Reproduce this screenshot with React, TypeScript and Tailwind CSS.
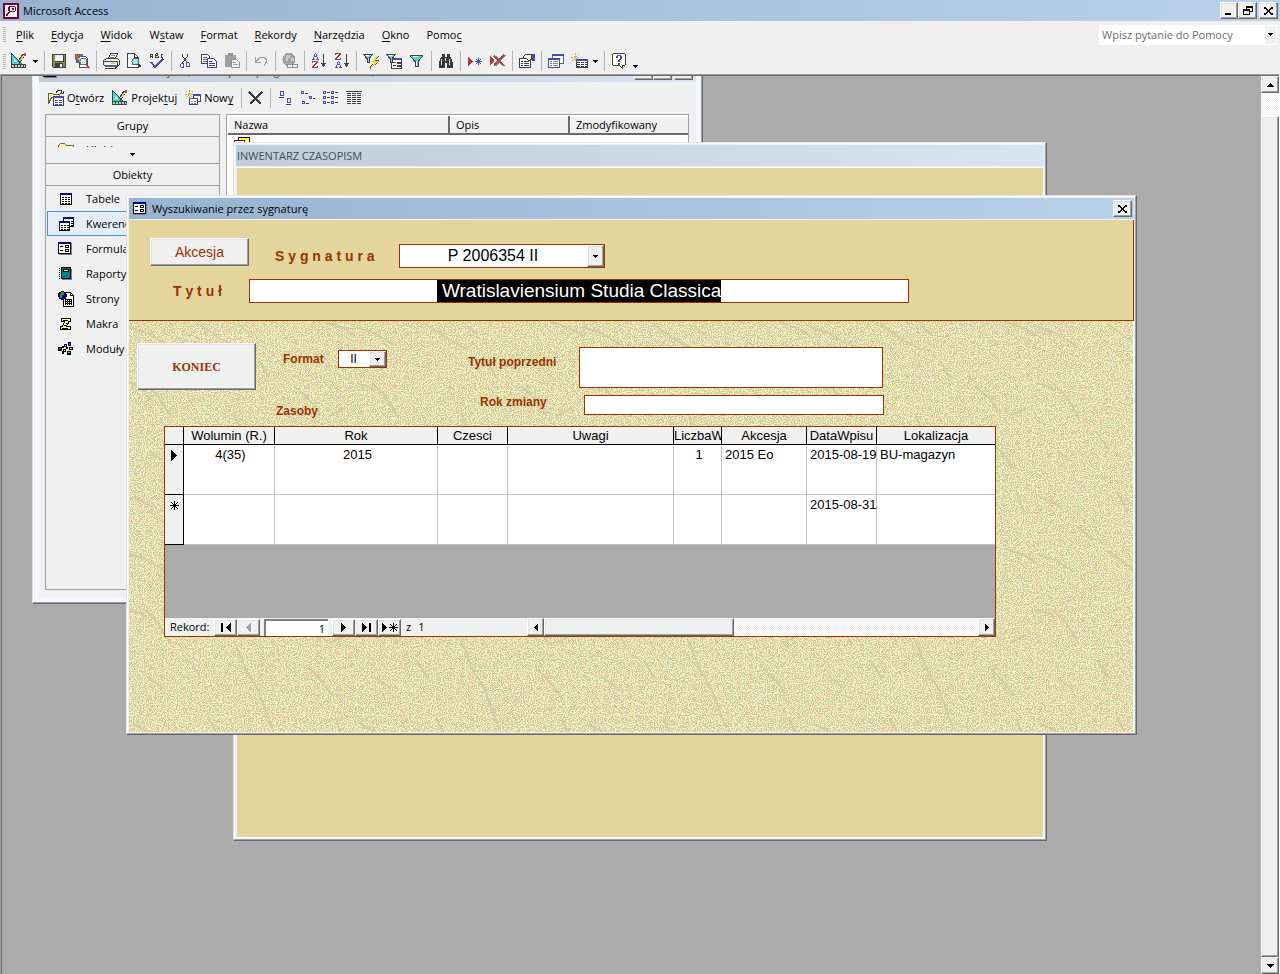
import React, { useEffect, useRef } from "react";

const raised =
  "bg-[#f0f0f0] border border-t-white border-l-white border-r-[#696969] border-b-[#696969] shadow-[inset_-1px_-1px_0_#a0a0a0,inset_1px_1px_0_#e3e3e3]";
const windowFrame =
  "border border-t-[#e3e3e3] border-l-[#e3e3e3] border-r-[#696969] border-b-[#696969] shadow-[inset_-1px_-1px_0_#a0a0a0,inset_1px_1px_0_#ffffff]";
const dither =
  "bg-[repeating-conic-gradient(#ffffff_0_25%,#f0f0f0_0_50%)] bg-[length:2px_2px]";
const formLabel = "text-xs font-bold text-[#993300]";
const formBox = "border border-[#993300] bg-white outline-none";

type IconProps = { children: React.ReactNode; w?: number; h?: number };

const Icon = ({ children, w = 16, h = 16 }: IconProps) => (
  <svg
    width={w}
    height={h}
    viewBox={`0 0 ${w} ${h}`}
    shapeRendering="crispEdges"
    fill="none"
    aria-hidden="true"
    className="block shrink-0"
  >
    {children}
  </svg>
);

/* ---------- small glyphs ---------- */

const Down = () => (
  <Icon w={5} h={3}>
    <path fill="#000" d="M0 0h5v1H0zM1 1h3v1H1zM2 2h1v1H2z" />
  </Icon>
);
const Up = () => (
  <Icon w={7} h={4}>
    <path fill="#000" d="M3 0h1v1H3zM2 1h3v1H2zM1 2h5v1H1zM0 3h7v1H0z" />
  </Icon>
);
const BigDown = () => (
  <Icon w={7} h={4}>
    <path fill="#000" d="M0 0h7v1H0zM1 1h5v1H1zM2 2h3v1H2zM3 3h1v1H3z" />
  </Icon>
);
const Right = () => (
  <Icon w={4} h={7}>
    <path fill="#000" d="M0 0h1v7H0zM1 1h1v5H1zM2 2h1v3H2zM3 3h1v1H3z" />
  </Icon>
);
const Left = () => (
  <Icon w={4} h={7}>
    <path fill="#000" d="M3 0h1v7H3zM2 1h1v5H2zM1 2h1v3H1zM0 3h1v1H0z" />
  </Icon>
);
const Cross = () => (
  <Icon w={9} h={8}>
    <path
      fill="#000"
      d="M0 0h2v1H0zM7 0h2v1H7zM0 1h3v1H0zM6 1h3v1H6zM2 2h2v1H2zM5 2h2v1H5zM3 3h3v2H3zM2 5h2v1H2zM5 5h2v1H5zM0 6h3v1H0zM6 6h3v1H6zM0 7h2v1H0zM7 7h2v1H7z"
    />
  </Icon>
);
const Star = () => (
  <Icon w={9} h={9}>
    <path stroke="#000" d="M4.500 0v9M0 4.500h9" />
    <path fill="#000" d="M1 1h1v1H1zM2 2h1v1H2zM3 3h1v1H3zM5 3h1v1H5zM6 2h1v1H6zM7 1h1v1H7zM3 5h1v1H3zM2 6h1v1H2zM1 7h1v1H1zM5 5h1v1H5zM6 6h1v1H6zM7 7h1v1H7z" />
  </Icon>
);

/* ---------- toolbar icons ---------- */

const DesignIcon = () => (
  <Icon>
    <path fill="#3fd9d9" d="M1 1v10h10z" />
    <path fill="#f0f0f0" d="M3 6v3h3z" />
    <path stroke="#404040" d="M.5 0v11M1 1l10 10M0 11.500h15M0 14.500h15M.5 11v4M14.500 11v4" />
    <path fill="#a8dcdc" d="M1 12h13v2H1z" />
    <path stroke="#404040" d="M3.500 12v2M6.500 12v2M9.500 12v2M12.500 12v2" />
    <path stroke="#404040" strokeWidth="3" d="M8 9l5-8" />
    <path stroke="#d8c860" strokeWidth="1.500" d="M9 8l4-6" />
    <path fill="#a05050" d="M13 0h2v3h-2z" />
    <path fill="#404040" d="M8 9h1v2H8z" />
  </Icon>
);
const SaveIcon = () => (
  <Icon>
    <path fill="#404040" d="M1 1h14v14H2l-1-1z" />
    <path fill="#8c8c3c" d="M2 2h2v7h9V2h1v12H2z" />
    <path fill="#f0f0f0" d="M4 2h8v6H4z" />
    <path fill="#404040" d="M4 10h8v5H4z" />
    <path fill="#f0f0f0" d="M9 11h2v3H9z" />
  </Icon>
);
const FileSearchIcon = () => (
  <Icon>
    <path fill="#fff" stroke="#505050" d="M5.500 3.500h6l2 2v9h-8z" />
    <path fill="#8a8a3c" stroke="#606060" d="M1.500 1.500h4v3h-4z" />
    <path fill="#6060b0" d="M2 6h4v4H2zM6 1h3v3H6z" />
    <path fill="#a86060" d="M1 4h3v3H1z" />
    <path fill="#e8d860" d="M5 5h3v3H5z" />
    <circle cx="9.500" cy="8.500" r="3.500" fill="#d8f0f0" stroke="#707070" />
    <path stroke="#c03030" strokeWidth="2" d="M12 11l3 4" />
  </Icon>
);
const PrintIcon = () => (
  <Icon w={17}>
    <path fill="#fff" stroke="#404040" d="M5.500 5.500l2-5h7l-2 5z" />
    <path stroke="#808080" d="M8 2.500h4M7 4.500h4" />
    <path fill="#f0f0f0" stroke="#404040" d="M.5 7.500l3-2h11l2 2v4l-2 2h-12l-2-2z" />
    <path stroke="#404040" d="M1 8.500h13M14.500 8v5M2 15.500h10l3-3" />
    <path fill="#c8b838" d="M8 10h4v1H8z" />
    <path fill="#606060" d="M2 12h12v2H2z" />
  </Icon>
);
const PreviewIcon = () => (
  <Icon>
    <path fill="#fff" stroke="#404040" d="M1.500.5h7l4 4v10h-11z" />
    <path stroke="#404040" d="M8.500 1v3.500H12" />
    <circle cx="9.500" cy="8.500" r="3.500" fill="#9fe3e3" stroke="#606060" />
    <path stroke="#404040" strokeWidth="2" d="M12 11l3 3" />
  </Icon>
);
const SpellIcon = () => (
  <Icon>
    <path stroke="#404040" d="M1.500 5V1.500h2V5M1 3.500h3M6.500 5V.5M7 .5h1.500v2H7M7 4.500h2V3M14 1.500h-2v3h2" />
    <path stroke="#4a4ab0" strokeWidth="2" d="M2 9l4 5 8-8" />
  </Icon>
);
const CutIcon = () => (
  <Icon>
    <path stroke="#404040" d="M4.500 1v2l5 7M9.500 1v2l-5 7" />
    <path stroke="#4a4ab0" d="M3.500 10.500h2v4h-2l-1-1v-2zM8.500 9.500h2l1 1v3h-3z" />
  </Icon>
);
const CopyIcon = () => (
  <Icon>
    <path fill="#fff" stroke="#404040" d="M.5 1.500h6l2 2v7h-8z" />
    <path stroke="#606060" d="M2 4.500h4M2 6.500h4M2 8.500h4" />
    <path fill="#fff" stroke="#4040a0" d="M6.500 5.500h6l3 3v6h-9z" />
    <path stroke="#4040a0" d="M8 8.500h3M8 10.500h6M8 12.500h6" />
  </Icon>
);
const PasteIcon = () => (
  <Icon>
    <path fill="#a0a0a0" d="M1 2h11v12H1z" />
    <path fill="#909090" d="M4 0h5v3H4z" />
    <path fill="#f4f4f4" stroke="#909090" d="M7.500 6.500h5l3 3v5h-8z" />
    <path stroke="#a0a0a0" d="M9 9.500h3M9 11.500h5" />
  </Icon>
);
const UndoIcon = () => (
  <Icon>
    <path stroke="#a0a0a0" d="M2.500 4v6M2 9.500h6M3 8.500l4-4h4l2 2v3l-2 3" />
  </Icon>
);
const GlobeIcon = () => (
  <Icon>
    <circle cx="7" cy="6.500" r="6" fill="#a4a4a4" stroke="#989898" />
    <path fill="#c8c8c8" d="M4 2h4v3H6v3H4zM9 5h3v3H9z" />
    <path fill="#f0f0f0" stroke="#909090" d="M5.500 11.500h5v3h-5zM10.500 11.500h5v3h-5z" />
  </Icon>
);
const LetterA = ({ x, y }: { x: number; y: number }) => (
  <path
    transform={`translate(${x} ${y})`}
    fill="#4a4ab0"
    d="M3 0h1v1H3zM2 1h1v3H2zM4 1h1v3H4zM2 3h3v1H2zM1 4h1v3H1zM5 4h1v3H5zM0 6h3v1H0zM4 6h3v1H4z"
  />
);
const LetterZ = ({ x, y }: { x: number; y: number }) => (
  <path
    transform={`translate(${x} ${y})`}
    fill="#a83c3c"
    d="M0 0h6v1H0zM0 0h1v2H0zM4 1h2v1H4zM3 2h2v1H3zM2 3h2v1H2zM1 4h2v1H1zM0 5h2v1H0zM0 6h6v1H0zM5 5h1v2H5z"
  />
);
const SortArrow = () => (
  <path fill="#404040" d="M12 1h1v13h-1zM10 10h5v1h-5zM11 11h3v2h-3z" />
);
const SortAscIcon = () => (
  <Icon>
    <LetterA x={1} y={0} />
    <LetterZ x={1} y={8} />
    <SortArrow />
  </Icon>
);
const SortDescIcon = () => (
  <Icon>
    <LetterZ x={1} y={0} />
    <LetterA x={1} y={8} />
    <SortArrow />
  </Icon>
);
const FunnelSmall = () => (
  <>
    <path fill="#8ad0d0" stroke="#404040" d="M.5 1.500h9l-3.500 4v4h-2v-4z" />
    <path stroke="#e8ffff" d="M3 2.500h3" />
  </>
);
const FilterSelectionIcon = () => (
  <Icon>
    <FunnelSmall />
    <path stroke="#505050" strokeWidth="2" d="M15 3l-4 5h4l-8 7" />
    <path stroke="#f0e040" strokeWidth="1.500" d="M14 3l-4 6h4l-6 5" />
  </Icon>
);
const FilterFormIcon = () => (
  <Icon>
    <path fill="#fff" stroke="#404040" d="M5.500 5.500h10v10h-10z" />
    <path fill="#4a4ab0" d="M6 5h10v2H6z" />
    <path stroke="#404040" d="M7 9.500h3M7 12.500h3M11.500 9.500h3v1h-3zM11.500 12.500h3v1h-3z" />
    <FunnelSmall />
  </Icon>
);
const FilterIcon = () => (
  <Icon>
    <path fill="#5cc8c8" stroke="#404040" d="M1.500 2.500h12v1l-4.500 5v5h-3v-5l-4.500-5z" />
    <path stroke="#e8ffff" d="M4 3.500h5M7.500 8v5" />
  </Icon>
);
const BinocularsIcon = () => (
  <Icon>
    <path fill="#383838" d="M4 1h3v3h2V1h3v3h1l2 6v5H9v-5H7v5H1v-5l2-6h1z" />
    <path stroke="#d8d8d8" d="M3.500 6v6M11.500 6v6M7.500 5v3" />
  </Icon>
);
const NewRecordIcon = () => (
  <Icon>
    <path fill="#a83c3c" d="M1 4h1v9H1zM2 5h1v7H2zM3 6h1v5H3zM4 7h1v3H4zM5 8h1v1H5z" />
    <path stroke="#4a4ab0" d="M11.500 5v7M8 8.500h7M9 6l5 5M14 6l-5 5" />
  </Icon>
);
const DeleteRecordIcon = () => (
  <Icon>
    <path fill="#a83c3c" d="M0 3h1v9H0zM1 4h1v7H1zM2 5h1v5H2zM3 6h1v3H3z" />
    <path stroke="#808080" strokeWidth="2" d="M5 3l9 10M15 2L5 13" />
    <path stroke="#a85050" strokeWidth="1.500" d="M4 3l9 9M14 2L4 12" />
  </Icon>
);
const PropertiesIcon = () => (
  <Icon>
    <path fill="#fff" stroke="#404040" d="M.5 5.500h11v9H.5z" />
    <path stroke="#404040" d="M2 8.500h2M5 8.500h5M2 10.500h2M5 10.500h5M2 12.500h2M5 12.500h5" />
    <path fill="#f8f0d8" stroke="#404040" d="M4.500 3.500l2-2h6v5l-3 1-2-2h-3z" />
    <path fill="#4a4ab0" d="M13 1h3v7h-3z" />
  </Icon>
);
const DbWindowIcon = () => (
  <Icon>
    <path fill="#fff" stroke="#606080" d="M4.500 1.500h11v9h-11z" />
    <path fill="#4a4ab0" d="M4 1h12v2H4z" />
    <path fill="#fff" stroke="#505060" d="M.5 5.500h11v9H.5z" />
    <path fill="#4a4ab0" d="M0 5h12v2H0z" />
    <path stroke="#808080" d="M2 8.500h2M5 8.500h5M2 10.500h2M5 10.500h5M2 12.500h2M5 12.500h5" />
  </Icon>
);
const NewObjectIcon = () => (
  <Icon w={17}>
    <path stroke="#c8bc60" strokeDasharray="2 1" d="M4.500 0v9M0 4.500h9M1 1l7 7M8 1L1 8" />
    <path fill="#fff" stroke="#404040" d="M5.500 6.500h11v8h-11z" />
    <path fill="#4a4ab0" d="M5 6h12v2H5z" />
    <path stroke="#404040" strokeDasharray="3 1" d="M6 9.500h10M6 11.500h10M6 13.500h10" />
  </Icon>
);
const HelpIcon = () => (
  <Icon>
    <path fill="#fffce8" stroke="#404040" d="M2.500.5h11l1 1v10l-1 1h-2v3l-3-3h-6l-1-1v-10z" />
    <path fill="#4a4ab0" d="M6 2h4v1H6zM5 3h2v2H5zM9 3h2v3H9zM8 6h2v1H8zM7 7h2v2H7zM7 10h2v2H7z" />
  </Icon>
);

/* ---------- database window icons ---------- */

const OpenIcon = () => (
  <Icon>
    <path fill="#fff0a0" stroke="#606040" d="M.5 3.500h4l1 1h6v3h-8l-3 6z" />
    <path stroke="#404040" d="M8 2.500l2-2h3l1 2M12 3.500h3v-3" />
    <path fill="#fff" stroke="#404080" d="M5.500 6.500h10v9h-10z" />
    <path fill="#4a4ab0" d="M5 6h11v2H5z" />
    <path stroke="#4a4ab0" d="M7 10.500h3M7 12.500h3M11 10.500h3M11 12.500h3M7 14.500h3M11 14.500h3" />
  </Icon>
);
const NewIcon = () => (
  <Icon>
    <path stroke="#c8b820" strokeDasharray="2 1" d="M4.500 0v8M0 4.500h8M1 1l6 6M8 1L1 8" />
    <path fill="#fff" stroke="#404080" d="M8.500 4.500h7v7h-7z" />
    <path fill="#4a4ab0" d="M8 4h8v2H8z" />
    <path fill="#fff" stroke="#404080" d="M4.500 8.500h8v6h-8z" />
    <path fill="#4a4ab0" d="M4 8h9v1H4z" />
    <path stroke="#808080" d="M6 11.500h2M9 11.500h2M6 13.500h2M9 13.500h2" />
  </Icon>
);
const DeleteIcon = () => (
  <Icon>
    <path stroke="#383838" strokeWidth="1.500" d="M1 2l12 12M14 2L2 14" />
  </Icon>
);
const LargeIconsIcon = () => (
  <Icon>
    <path stroke="#4a4ab0" d="M3.500 1.500h3v4h-3zM10.500 8.500h3v4h-3z" />
    <path stroke="#404040" d="M2 7.500h5M9 14.500h5" />
  </Icon>
);
const SmallIconsIcon = () => (
  <Icon>
    <path stroke="#4a4ab0" d="M1.500 1.500h2v2h-2zM9.500 6.500h2v2h-2zM2.500 11.500h2v2h-2z" />
    <path stroke="#404040" d="M5 3.500h3M13 8.500h2M6 13.500h3" />
  </Icon>
);
const ListIcon = () => (
  <Icon>
    <path stroke="#4a4ab0" d="M.5 1.500h2v2h-2zM.5 6.500h2v2h-2zM.5 11.500h2v2h-2zM8.500 1.500h2v2h-2zM8.500 6.500h2v2h-2zM8.500 11.500h2v2h-2z" />
    <path stroke="#404040" d="M4 2.500h3M4 7.500h3M4 12.500h3M12 2.500h3M12 7.500h3M12 12.500h3" />
  </Icon>
);
const DetailsIcon = () => (
  <Icon>
    <path stroke="#404040" d="M0 1.500h16" />
    <path
      stroke="#404040"
      strokeDasharray="4 1"
      d="M1 3.500h15M1 5.500h15M1 7.500h15M1 9.500h15M1 11.500h15M1 13.500h15"
    />
  </Icon>
);
const TableIcon = () => (
  <Icon>
    <path fill="#fff" stroke="#000" d="M2.500 2.500h11v11h-11z" />
    <path fill="#000080" d="M2 2h12v2H2z" />
    <path stroke="#000" strokeDasharray="2 1" d="M4 6.500h8M4 8.500h8M4 10.500h8M4 12.500h8" />
  </Icon>
);
const QueryIcon = () => (
  <Icon>
    <path fill="#fff" stroke="#000" d="M5.500 1.500h10v9h-10z" />
    <path fill="#000080" d="M5 1h11v2H5z" />
    <path stroke="#000" strokeDasharray="2 1" d="M7 5.500h8M7 7.500h8M7 9.500h8" />
    <path fill="#fff" stroke="#000" d="M1.500 5.500h10v9h-10z" />
    <path fill="#000080" d="M1 5h11v2H1z" />
    <path stroke="#000" strokeDasharray="2 1" d="M3 9.500h8M3 11.500h8M3 13.500h8" />
  </Icon>
);
const FormIcon = () => (
  <Icon w={14} h={13}>
    <path fill="#fff" stroke="#000" d="M.5.5h12v11H.5z" />
    <path fill="#000080" d="M0 0h13v2H0z" />
    <path stroke="#000" d="M2 4.500h3M2 8.500h3M7.500 3.500h3v2h-3zM7.500 7.500h3v2h-3z" />
    <path fill="#808080" d="M13 1h1v12H1v-1h12z" />
  </Icon>
);
const ReportIcon = () => (
  <Icon>
    <path fill="#008080" stroke="#000" d="M3.500 1.500h9v11h-9z" />
    <path fill="#fff" stroke="#000" d="M5.500 3.500h5v2h-5z" />
    <path stroke="#000" strokeDasharray="1 1" d="M1.500 2v11" />
    <path fill="#808080" d="M13 3h1v11H4v-1h9z" />
  </Icon>
);
const PageIcon = () => (
  <Icon>
    <path fill="#fff" stroke="#000" d="M5.500 1.500h7l3 3v11h-10z" />
    <path stroke="#000" d="M12.500 2v2.500H15" />
    <path fill="#000" d="M7 8h7v6H7z" />
    <path stroke="#fff" strokeDasharray="1 1" d="M8 9.500h5M8 11.500h5M8 13.500h5" />
    <circle cx="4.500" cy="4.500" r="4" fill="#0000a0" stroke="#000" />
    <path fill="#20a040" d="M3 1h3v3H4v3H2V3h1z" />
  </Icon>
);
const MacroIcon = () => (
  <Icon>
    <path fill="#ffff90" stroke="#000" d="M3.500 2.500h9v3h-2l-2 5h4v3h-10v-3h2l2-5h-3z" />
    <path stroke="#000" d="M5 4.500h5M8 7.500h3M6 9.500h3M4 12.500h6" />
  </Icon>
);
const ModuleIcon = () => (
  <Icon>
    <path fill="#000" d="M10 1h3v4h-3zM6 3h3v3H6zM0 6h4v4H0zM4 5h2v2H4zM11 6h4v3h-4zM5 8h3v3H5zM8 6h2v2H8zM9 10h4v4H9zM4 10h2v3H4z" />
    <path fill="#f0f" d="M11 2h1v2h-1zM1 7h2v1H1z" />
    <path fill="#0ff" d="M7 4h1v1H7zM10 11h2v1h-2z" />
    <path fill="#ff0" d="M12 7h2v1h-2zM6 9h1v1H6z" />
  </Icon>
);

/* ---------- shared pieces ---------- */

const ToolButton = ({ label, children }: { label: string; children: React.ReactNode }) => (
  <button type="button" aria-label={label} className="flex h-[22px] w-[23px] items-center pl-1">
    {children}
  </button>
);

const MenuArrow = ({ label, low }: { label: string; low?: boolean }) => (
  <button
    type="button"
    aria-label={label}
    className={`flex w-[11px] justify-center ${low ? "h-[22px] items-end pb-1" : "h-[22px] items-center"}`}
  >
    <Down />
  </button>
);

const Separator = () => (
  <div className="flex h-5 w-[6px] justify-center">
    <div className="w-px bg-[#b4b4b4]" />
  </div>
);

const Grip = () => (
  <div className="mr-px h-[15px] w-[3px] bg-[repeating-linear-gradient(#b8b8b8_0_1px,#f0f0f0_1px_2px)]" />
);

// Underlines the access key of a menu caption
const Caption = ({ text, at }: { text: string; at: number }) => (
  <span>
    {text.slice(0, at)}
    <span className="underline underline-offset-2">{text[at]}</span>
    {text.slice(at + 1)}
  </span>
);

const menus = [
  { text: "Plik", at: 0 },
  { text: "Edycja", at: 0 },
  { text: "Widok", at: 0 },
  { text: "Wstaw", at: 1 },
  { text: "Format", at: 0 },
  { text: "Rekordy", at: 0 },
  { text: "Narzędzia", at: 0 },
  { text: "Okno", at: 0 },
  { text: "Pomoc", at: 4 },
];

const TitleBar = () => (
  <header className="flex h-[21px] items-center bg-linear-to-r from-[#98b3d1] to-[#b9d1ec] pr-[2px] pl-[3px]">
    <Icon>
      <path fill="#fff" stroke="#7a0030" strokeWidth="2" d="M1 1h14v14H1z" />
      <path fill="#7a0030" d="M6 3h6v1H6zM5 4h2v4H5zM12 4h1v4h-1zM7 8h5v1H7zM6 8h2v1H6zM5 9h2v1H5zM4 10h2v1H4zM3 11h2v2H3zM9 5h2v2H9z" />
    </Icon>
    <h1 className="ml-1 flex-1">Microsoft Access</h1>
    <button type="button" aria-label="Minimalizuj" className={`flex h-[17px] w-[18px] items-end pb-[3px] pl-1 ${raised}`}>
      <span className="h-[2px] w-[6px] bg-black" />
    </button>
    <button type="button" aria-label="Przywróć" className={`flex h-[17px] w-[19px] items-center justify-center ${raised}`}>
      <Icon w={10} h={9}>
        <path stroke="#000" d="M3.500 3V.5h6v5H7M3 1.500h7M.5 3.500h6v5h-6zM0 4.500h7" />
      </Icon>
    </button>
    <button type="button" aria-label="Zamknij" className={`ml-[2px] flex h-[17px] w-[19px] items-center justify-center ${raised}`}>
      <Cross />
    </button>
  </header>
);

const MenuBar = () => (
  <nav className="flex h-[27px] items-center pl-[3px]">
    <Grip />
    <div className="flex flex-1 gap-[17px] pl-[9px]">
      {menus.map((m) => (
        <button type="button" key={m.text}>
          <Caption text={m.text} at={m.at} />
        </button>
      ))}
    </div>
    <div className="mr-[3px] flex h-5 w-[178px] bg-white p-px">
      <input
        type="text"
        aria-label="Wpisz pytanie do Pomocy"
        placeholder="Wpisz pytanie do Pomocy"
        className="min-w-0 flex-1 pl-[2px] outline-none placeholder:text-[#6d6d6d]"
      />
      <button type="button" aria-label="Pokaż pytania" className="flex w-[11px] items-center justify-center bg-[#f0f0f0]">
        <Down />
      </button>
    </div>
  </nav>
);

const Toolbar = () => (
  <div className="flex h-[26px] items-center pl-[3px]">
    <Grip />
    <ToolButton label="Widok projektu"><DesignIcon /></ToolButton>
    <MenuArrow label="Widoki" />
    <Separator />
    <ToolButton label="Zapisz"><SaveIcon /></ToolButton>
    <ToolButton label="Wyszukaj plik"><FileSearchIcon /></ToolButton>
    <Separator />
    <ToolButton label="Drukuj"><PrintIcon /></ToolButton>
    <ToolButton label="Podgląd wydruku"><PreviewIcon /></ToolButton>
    <ToolButton label="Pisownia"><SpellIcon /></ToolButton>
    <Separator />
    <ToolButton label="Wytnij"><CutIcon /></ToolButton>
    <ToolButton label="Kopiuj"><CopyIcon /></ToolButton>
    <ToolButton label="Wklej"><PasteIcon /></ToolButton>
    <Separator />
    <ToolButton label="Cofnij"><UndoIcon /></ToolButton>
    <Separator />
    <ToolButton label="Wstaw hiperłącze"><GlobeIcon /></ToolButton>
    <Separator />
    <ToolButton label="Sortuj rosnąco"><SortAscIcon /></ToolButton>
    <ToolButton label="Sortuj malejąco"><SortDescIcon /></ToolButton>
    <Separator />
    <ToolButton label="Filtruj według wyboru"><FilterSelectionIcon /></ToolButton>
    <ToolButton label="Filtruj według formularza"><FilterFormIcon /></ToolButton>
    <ToolButton label="Zastosuj filtr"><FilterIcon /></ToolButton>
    <Separator />
    <ToolButton label="Znajdź"><BinocularsIcon /></ToolButton>
    <Separator />
    <ToolButton label="Nowy rekord"><NewRecordIcon /></ToolButton>
    <ToolButton label="Usuń rekord"><DeleteRecordIcon /></ToolButton>
    <Separator />
    <ToolButton label="Właściwości"><PropertiesIcon /></ToolButton>
    <Separator />
    <ToolButton label="Okno bazy danych"><DbWindowIcon /></ToolButton>
    <ToolButton label="Nowy obiekt"><NewObjectIcon /></ToolButton>
    <MenuArrow label="Nowe obiekty" />
    <Separator />
    <ToolButton label="Pomoc"><HelpIcon /></ToolButton>
    <MenuArrow label="Opcje paska narzędzi" low />
  </div>
);

const objects = [
  { name: "Tabele", icon: <TableIcon /> },
  { name: "Kwerendy", icon: <QueryIcon />, active: true },
  { name: "Formularze", icon: <FormIcon /> },
  { name: "Raporty", icon: <ReportIcon /> },
  { name: "Strony", icon: <PageIcon /> },
  { name: "Makra", icon: <MacroIcon /> },
  { name: "Moduły", icon: <ModuleIcon /> },
];

const headerCell =
  "h-[19px] border-r-2 border-b-2 border-[#696969] bg-[#f0f0f0] pl-[6px] text-left font-normal shadow-[inset_1px_1px_0_#ffffff]";

const DatabaseWindow = () => (
  <section
    aria-label="Okno bazy danych"
    className={`absolute -top-5 left-[30px] flex h-[548px] w-[671px] flex-col bg-[#f4f8fe] px-[6px] pt-[3px] pb-[6px] ${windowFrame}`}
  >
    <div className="flex h-[22px] shrink-0 items-center bg-linear-to-r from-[#bfcddb] to-[#d7e4f2] pr-[3px] pl-1">
      <FormIcon />
      <h2 className="ml-[3px] flex-1 text-[#434e54]">
        Inwentarz : Baza danych (format pliku programu Access 2000)
      </h2>
      <span className={`h-[18px] w-[19px] ${raised}`} />
      <span className={`h-[18px] w-[19px] ${raised}`} />
      <span className={`ml-[2px] h-[18px] w-[19px] ${raised}`} />
    </div>
    <div className="flex min-h-0 flex-1 flex-col bg-[#f0f0f0] pr-[7px] pb-[7px] pl-[6px]">
      <div className="flex h-8 shrink-0 items-center pl-[3px]">
        <button type="button" className="flex items-center gap-[3px]">
          <OpenIcon />
          <Caption text="Otwórz" at={1} />
        </button>
        <button type="button" className="ml-2 flex items-center gap-[3px]">
          <DesignIcon />
          <Caption text="Projektuj" at={6} />
        </button>
        <button type="button" className="ml-2 flex items-center gap-[3px]">
          <NewIcon />
          <Caption text="Nowy" at={3} />
        </button>
        <div className="w-[5px]" />
        <Separator />
        <ToolButton label="Usuń"><DeleteIcon /></ToolButton>
        <Separator />
        <ToolButton label="Duże ikony"><LargeIconsIcon /></ToolButton>
        <ToolButton label="Małe ikony"><SmallIconsIcon /></ToolButton>
        <ToolButton label="Lista"><ListIcon /></ToolButton>
        <ToolButton label="Szczegóły"><DetailsIcon /></ToolButton>
      </div>
      <div className="flex min-h-0 flex-1 gap-[6px]">
        <aside className="w-[175px] border border-[#a0a0a0]">
          <button type="button" className="block h-[22px] w-full border-b border-[#a0a0a0]">
            Grupy
          </button>
          <div className="flex h-[27px] flex-col items-center border-b border-[#a0a0a0] pt-[5px]">
            <div className="flex h-[5px] w-full items-start gap-3 overflow-hidden pl-3">
              <Icon>
                <path fill="#fff0a0" stroke="#707050" d="M.5 3.500l2-2h4l2 2h7v9H.5z" />
              </Icon>
              <span>Ulubione</span>
            </div>
            <div className="pt-[6px]">
              <Down />
            </div>
          </div>
          <button type="button" className="block h-[22px] w-full border-b border-[#a0a0a0]">
            Obiekty
          </button>
          <ul className="pl-px">
            {objects.map((o) => (
              <li key={o.name} className={o.active ? "border border-[#3c91e6] bg-[#e5eef8]" : "border border-transparent"}>
                <button type="button" className="flex h-[23px] w-full items-center pl-[10px]">
                  <span className="w-7">{o.icon}</span>
                  {o.name}
                </button>
              </li>
            ))}
          </ul>
        </aside>
        <div className="flex-1 border border-[#a0a0a0] bg-white pt-px pl-px">
          <table className="w-full table-fixed border-separate border-spacing-0">
            <colgroup>
              <col className="w-[222px]" />
              <col className="w-[120px]" />
              <col />
            </colgroup>
            <thead>
              <tr>
                <th className={headerCell}>Nazwa</th>
                <th className={headerCell}>Opis</th>
                <th className="h-[19px] border-b-2 border-[#696969] bg-[#f0f0f0] pl-[6px] text-left font-normal shadow-[inset_1px_1px_0_#ffffff]">
                  Zmodyfikowany
                </th>
              </tr>
            </thead>
            <tbody>
              <tr>
                <td colSpan={3} className="pt-[2px] pl-[6px]">
                  <Icon>
                    <path fill="#ffff40" stroke="#000" d="M4.500.5h11v8h-11z" />
                    <path fill="#fff" stroke="#800040" d="M.5 3.500h10v8H.5z" />
                  </Icon>
                </td>
              </tr>
            </tbody>
          </table>
        </div>
      </div>
    </div>
  </section>
);

const InventoryWindow = () => (
  <section
    aria-label="INWENTARZ CZASOPISM"
    className={`absolute top-[66px] left-[231px] flex h-[699px] w-[814px] flex-col bg-[#f0f0f0] p-[2px] ${windowFrame}`}
  >
    <h2 className="flex h-[21px] shrink-0 items-center bg-linear-to-r from-[#bfcddb] to-[#d7e4f2] pl-px text-[#434e54]">
      INWENTARZ CZASOPISM
    </h2>
    <div className="mt-px flex-1 border border-t-white border-r-white border-b-white border-l-[#f0f0f0] bg-[#e4d59c]" />
  </section>
);

// Sandy paper: per-pixel noise snapped to a few pastel colours, with fibres on top
const PaperTexture = () => (
  <svg className="absolute inset-0 h-full w-full" aria-hidden="true">
    <defs>
      <filter id="grain" x="0" y="0" width="100%" height="100%" colorInterpolationFilters="sRGB">
        <feTurbulence type="fractalNoise" baseFrequency="0.91" numOctaves="1" seed="7" />
        <feColorMatrix values="4 2 2 0 -3.500  2 4 2 0 -3.600  2 2 4 0 -3.600  0 0 0 0 1" />
        <feComponentTransfer>
          <feFuncR type="discrete" tableValues="0.8 1" />
          <feFuncG type="discrete" tableValues="0.8 1" />
          <feFuncB type="discrete" tableValues="0.62 0.8" />
        </feComponentTransfer>
      </filter>
      <pattern id="fibres" width="227" height="227" patternUnits="userSpaceOnUse">
        <g fill="none" stroke="#cac698" strokeWidth="2" opacity="0.7">
          <path d="M0 6l18 6 20 12M70 3l20 14 22 12M196 1l18 6 13 8M110 4l12 10" />
          <path d="M16 62l12 12 14 22M165 65l14 12 12 16M0 62l14 4 4 4M130 40l10 16" />
          <path d="M105 92l12 30 12 20 14 38M60 112l12 18M180 120l14 14 10 14M20 130l14 10" />
          <path d="M4 176l20 10M80 170l10 20M150 190l24 16M206 170l8 20M40 205l16 14M200 95l16-8" />
        </g>
      </pattern>
    </defs>
    <rect width="100%" height="100%" filter="url(#grain)" />
    <rect width="100%" height="100%" fill="#d8cca4" opacity="0.2" />
    <rect width="100%" height="100%" fill="url(#fibres)" />
  </svg>
);

type ComboProps = { id: string; value: string; className: string };

const Combo = ({ id, value, className }: ComboProps) => (
  <div className={`relative ${className}`}>
    <select
      id={id}
      defaultValue={value}
      className={`block h-full w-full appearance-none pr-[18px] text-center text-black [text-align-last:center] ${formBox}`}
    >
      <option>{value}</option>
    </select>
    <span
      aria-hidden="true"
      className={`pointer-events-none absolute inset-y-px right-px flex w-[17px] items-center justify-center ${raised}`}
    >
      <Down />
    </span>
  </div>
);

const columns = [
  "Wolumin (R.)",
  "Rok",
  "Czesci",
  "Uwagi",
  "LiczbaW",
  "Akcesja",
  "DataWpisu",
  "Lokalizacja",
];

const CurrentRow = () => (
  <Icon w={6} h={11}>
    <path fill="#000" d="M0 0h1v11H0zM1 1h1v9H1zM2 2h1v7H2zM3 3h1v5H3zM4 4h1v3H4zM5 5h1v1H5z" />
  </Icon>
);

const rows = [
  { mark: <CurrentRow />, cells: ["4(35)", "2015", "", "", "1", "2015 Eo", "2015-08-19", "BU-magazyn"] },
  { mark: <Star />, cells: ["", "", "", "", "", "", "2015-08-31", ""] },
];

const NavRight = () => (
  <Icon w={5} h={9}>
    <path fill="#000" d="M0 0h1v9H0zM1 1h1v7H1zM2 2h1v5H2zM3 3h1v3H3zM4 4h1v1H4z" />
  </Icon>
);
const NavLeft = ({ color }: { color: string }) => (
  <Icon w={5} h={9}>
    <path fill={color} d="M4 0h1v9H4zM3 1h1v7H3zM2 2h1v5H2zM1 3h1v3H1zM0 4h1v1H0z" />
  </Icon>
);

const navButton = `flex h-[17px] w-[23px] items-center justify-center ${raised}`;

const Subform = () => (
  <div className="ml-[35px] flex h-[211px] w-[832px] flex-col border border-[#993300] bg-[#ababab]">
    <table className="w-full table-fixed border-separate border-spacing-0 bg-white text-[13px] leading-4 text-black">
      <colgroup>
        <col className="w-[19px]" />
        <col className="w-[91px]" />
        <col className="w-[163px]" />
        <col className="w-[70px]" />
        <col className="w-[166px]" />
        <col className="w-[48px]" />
        <col className="w-[85px]" />
        <col className="w-[70px]" />
        <col />
      </colgroup>
      <thead>
        <tr className="bg-[#f0f0f0]">
          <td className="h-[18px] border-r border-b border-black" />
          {columns.map((c) => (
            <th
              key={c}
              className="h-[18px] overflow-hidden border-r border-b border-black font-normal whitespace-nowrap last:border-r-0"
            >
              {c}
            </th>
          ))}
        </tr>
      </thead>
      <tbody>
        {rows.map((r, i) => (
          <tr key={i} className="align-top">
            <td className="h-[50px] border-r border-b border-black bg-[#f0f0f0] pt-1">
              <div className="flex h-3 items-center justify-center">{r.mark}</div>
            </td>
            {r.cells.map((c, j) => (
              <td
                key={j}
                className={`h-[50px] border-r border-b border-[#c0c0c0] pt-[2px] pl-[3px] whitespace-nowrap last:border-r-0 ${j < 5 ? "text-center" : ""}`}
              >
                {c}
              </td>
            ))}
          </tr>
        ))}
      </tbody>
    </table>
    <div className="mt-auto flex h-[18px] items-end bg-[#f0f0f0] font-['Open_Sans',sans-serif] text-[11px] text-black">
      <label htmlFor="record" className="w-[49px] pl-[5px] leading-[18px]">
        Rekord:
      </label>
      <button type="button" aria-label="Pierwszy rekord" className={navButton}>
        <span className="mr-[3px] h-[9px] w-[2px] bg-black" />
        <NavLeft color="#000" />
      </button>
      <button type="button" aria-label="Poprzedni rekord" className={navButton}>
        <NavLeft color="#a0a0a0" />
      </button>
      <input
        id="record"
        type="text"
        defaultValue="1"
        className="mx-1 h-[17px] w-16 border-t-2 border-l-2 border-[#808080] bg-white pr-[3px] text-right outline-none"
      />
      <button type="button" aria-label="Następny rekord" className={navButton}>
        <NavRight />
      </button>
      <button type="button" aria-label="Ostatni rekord" className={navButton}>
        <NavRight />
        <span className="ml-[2px] h-[9px] w-[2px] bg-black" />
      </button>
      <button type="button" aria-label="Nowy rekord" className={navButton}>
        <NavRight />
        <span className="ml-[2px]"><Star /></span>
      </button>
      <span className="ml-[5px] flex flex-1 gap-[7px] leading-[18px]">
        <span>z</span>
        <span>1</span>
      </span>
      <div className={`flex h-[18px] w-[468px] ${dither}`}>
        <button type="button" aria-label="Przewiń w lewo" className={`flex w-[17px] items-center justify-center ${raised}`}>
          <Left />
        </button>
        <div className={`w-[190px] ${raised}`} />
        <button type="button" aria-label="Przewiń w prawo" className={`ml-auto flex w-[17px] items-center justify-center ${raised}`}>
          <Right />
        </button>
      </div>
    </div>
  </div>
);

const SearchWindow = () => {
  const title = useRef<HTMLInputElement>(null);

  useEffect(() => {
    title.current?.focus();
    title.current?.select();
  }, []);

  return (
    <section
      aria-label="Wyszukiwanie przez sygnaturę"
      className={`absolute top-[119px] left-[124px] flex h-[540px] w-[1011px] flex-col bg-[#f0f0f0] p-[2px] ${windowFrame}`}
    >
      <div className="flex h-[21px] shrink-0 items-center bg-linear-to-r from-[#98b3d1] to-[#b9d1ec] pr-[2px] pl-1">
        <FormIcon />
        <h2 className="ml-[5px] flex-1">Wyszukiwanie przez sygnaturę</h2>
        <button type="button" aria-label="Zamknij okno" className={`flex h-[17px] w-[19px] items-center justify-center ${raised}`}>
          <Cross />
        </button>
      </div>
      <div className="mt-px flex flex-1 flex-col font-['Liberation_Sans',Arial,sans-serif]">
        <div className="h-[101px] border-r border-b border-[#993300] bg-[#e4d59c] pt-[18px]">
          <div className="flex h-[30px] items-end pl-[21px]">
            <button type="button" className={`h-7 w-[99px] self-start text-sm text-[#993300] ${raised}`}>
              Akcesja
            </button>
            <label htmlFor="signature" className="w-[150px] pl-[26px] text-sm leading-6 font-bold whitespace-nowrap text-[#993300]">
              S y g n a t u r a
            </label>
            <Combo id="signature" value="P 2006354 II" className="h-6 w-[206px] text-base leading-[22px]" />
          </div>
          <div className="mt-[11px] flex pl-11">
            <label htmlFor="title" className="w-[76px] text-sm leading-6 font-bold whitespace-nowrap text-[#993300]">
              T y t u ł
            </label>
            <input
              id="title"
              ref={title}
              type="text"
              defaultValue=" Wratislaviensium Studia Classica"
              className={`h-6 w-[660px] text-center text-[19px] leading-[22px] text-black selection:bg-black selection:text-white ${formBox}`}
            />
          </div>
        </div>
        <div className="relative flex-1 border-r border-white">
          <PaperTexture />
          <div className="relative pt-[22px]">
            <div className="flex h-[83px] items-start pl-2">
              <button
                type="button"
                className={`h-[47px] w-[119px] font-['Liberation_Serif','Times_New_Roman',serif] text-xs font-bold text-[#993300] ${raised}`}
              >
                KONIEC
              </button>
              <div className="ml-5 w-[111px] pt-[7px]">
                <div className="flex h-[18px] pl-[7px]">
                  <label htmlFor="format" className={`w-[55px] leading-[18px] ${formLabel}`}>
                    Format
                  </label>
                  <Combo id="format" value="II" className="w-[49px] text-xs" />
                </div>
                <h3 className={`mt-[33px] leading-5 ${formLabel}`}>Zasoby</h3>
              </div>
              <div className="ml-[81px] pt-1">
                <div className="flex">
                  <label htmlFor="previous" className={`w-[111px] leading-[30px] ${formLabel}`}>
                    Tytuł poprzedni
                  </label>
                  <textarea id="previous" className={`block h-[41px] w-[304px] resize-none ${formBox}`} />
                </div>
                <div className="mt-[7px] flex">
                  <label htmlFor="change-year" className={`w-[116px] pl-3 leading-[14px] ${formLabel}`}>
                    Rok zmiany
                  </label>
                  <input id="change-year" type="text" className={`h-5 w-[300px] ${formBox}`} />
                </div>
              </div>
            </div>
            <Subform />
          </div>
        </div>
      </div>
    </section>
  );
};

const App: React.FC = () => {
  return (
    <div className="flex h-screen flex-col overflow-hidden bg-[#f0f0f0] font-['Open_Sans','Noto_Sans',sans-serif] text-[11px] leading-4 text-black">
      <TitleBar />
      <MenuBar />
      <Toolbar />
      <div className="flex min-h-0 flex-1 border-t border-r border-l border-t-[#a0a0a0] border-r-white border-l-[#a0a0a0]">
        <main className="relative flex-1 overflow-hidden border-t border-l border-[#696969] bg-[#ababab]">
          <DatabaseWindow />
          <InventoryWindow />
          <SearchWindow />
        </main>
        <div className={`flex w-[18px] flex-col border-t border-[#696969] ${dither}`}>
          <button type="button" aria-label="Przewiń w górę" className={`flex h-[17px] items-center justify-center ${raised}`}>
            <Up />
          </button>
          <div className={`mt-[23px] flex-1 ${raised}`} />
          <button type="button" aria-label="Przewiń w dół" className={`flex h-[17px] items-center justify-center ${raised}`}>
            <BigDown />
          </button>
        </div>
      </div>
    </div>
  );
};

export default App;
